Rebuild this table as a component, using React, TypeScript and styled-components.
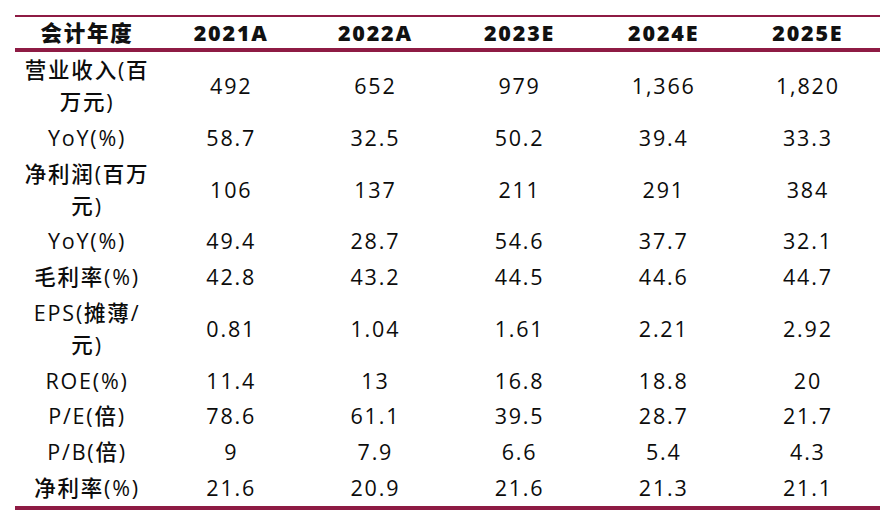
import styled, { createGlobalStyle } from "styled-components";

const GlobalStyle = createGlobalStyle`
  body {
    margin: 0;
    background: #ffffff;
    font-family: "Open Sans", "Noto Sans CJK SC", sans-serif;
  }
`;

const Page = styled.div`
  width: 896px;
  height: 524px;
  padding: 15px 0 0 15px;
  box-sizing: border-box;
  background: #ffffff;
`;

const Table = styled.table`
  width: 865px;
  border-collapse: collapse;
  table-layout: fixed;
  border-top: 2px solid #8e1b44;
  border-bottom: 4px solid #8e1b44;
  color: #111111;
  font-size: 21.5px;
  letter-spacing: 1.8px;
`;

const HeadRow = styled.tr`
  border-bottom: 4px solid #8e1b44;
`;

const HeadCell = styled.th`
  height: 31px;
  padding: 0;
  font-weight: 800;
  text-align: center;
  line-height: 31px;
`;

const Cell = styled.td`
  padding: 2px 0 1.75px;
  text-align: center;
  vertical-align: middle;
  line-height: 32px;
  font-weight: 500;
  color: #0c0c0c;
  white-space: nowrap;
`;

const years = ["2021A", "2022A", "2023E", "2024E", "2025E"];

const rows: { label: string[]; values: string[] }[] = [
  { label: ["营业收入(百", "万元)"], values: ["492", "652", "979", "1,366", "1,820"] },
  { label: ["YoY(%)"], values: ["58.7", "32.5", "50.2", "39.4", "33.3"] },
  { label: ["净利润(百万", "元)"], values: ["106", "137", "211", "291", "384"] },
  { label: ["YoY(%)"], values: ["49.4", "28.7", "54.6", "37.7", "32.1"] },
  { label: ["毛利率(%)"], values: ["42.8", "43.2", "44.5", "44.6", "44.7"] },
  { label: ["EPS(摊薄/", "元)"], values: ["0.81", "1.04", "1.61", "2.21", "2.92"] },
  { label: ["ROE(%)"], values: ["11.4", "13", "16.8", "18.8", "20"] },
  { label: ["P/E(倍)"], values: ["78.6", "61.1", "39.5", "28.7", "21.7"] },
  { label: ["P/B(倍)"], values: ["9", "7.9", "6.6", "5.4", "4.3"] },
  { label: ["净利率(%)"], values: ["21.6", "20.9", "21.6", "21.3", "21.1"] },
];

export default function App() {
  return (
    <Page>
      <GlobalStyle />
      <Table>
        <thead>
          <HeadRow>
            <HeadCell>会计年度</HeadCell>
            {years.map((y) => (
              <HeadCell key={y}>{y}</HeadCell>
            ))}
          </HeadRow>
        </thead>
        <tbody>
          {rows.map((r, i) => (
            <tr key={i}>
              <Cell>
                {r.label.map((part, j) => (
                  <span key={j}>
                    {j > 0 && <br />}
                    {part}
                  </span>
                ))}
              </Cell>
              {r.values.map((v, j) => (
                <Cell key={j}>{v}</Cell>
              ))}
            </tr>
          ))}
        </tbody>
      </Table>
    </Page>
  );
}
